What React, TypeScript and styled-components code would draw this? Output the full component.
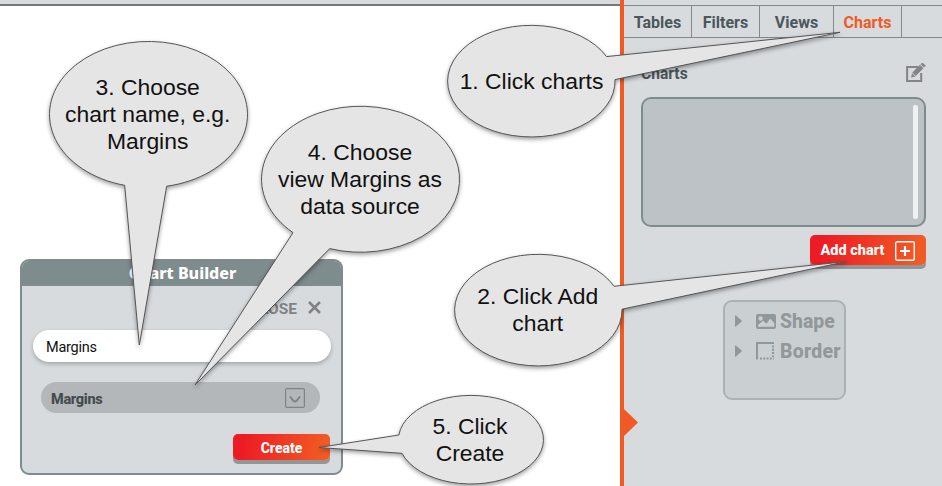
import React from 'react';
import styled, { createGlobalStyle } from 'styled-components';

const GlobalStyle = createGlobalStyle`
  * { box-sizing: border-box; }
  body { margin: 0; background: #fff; font-family: Roboto, sans-serif; }
`;

const Page = styled.div`
  position: relative;
  display: flex;
  width: 942px;
  height: 486px;
  overflow: hidden;
`;

const Workspace = styled.main`
  display: flex;
  flex-direction: column;
  width: 620px;
`;

const TopStrip = styled.div`
  height: 6px;
  background: #d7dbde;
  border-bottom: 2px solid #777;
`;

const Dialog = styled.section`
  display: flex;
  flex-direction: column;
  width: 323px;
  height: 216px;
  margin: 253px 0 0 20px;
  background: #d7dbde;
  border: 2px solid #7f8c8d;
  border-radius: 9px;
  overflow: hidden;
`;

const DialogTitle = styled.h1`
  margin: 0;
  height: 25px;
  padding-left: 2px;
  background: #7f8c8d;
  color: #fff;
  font: 800 16px/24px 'Noto Sans', sans-serif;
  text-align: center;
`;

const Label = styled.span<{ $size: number; $spacing?: number }>`
  font-size: ${(p) => p.$size}px;
  letter-spacing: ${(p) => p.$spacing ?? 0}px;
  white-space: nowrap;
`;

const CloseRow = styled.div`
  display: flex;
  justify-content: flex-end;
  align-items: center;
  gap: 11px;
  height: 21px;
  margin: 11px 20px 1px 0;
  color: #808284;
  font-weight: 700;
  ${Label} { padding-top: 2px; }
`;

const NameField = styled.div`
  display: flex;
  align-items: center;
  width: 298px;
  height: 32px;
  margin: 11px 0 0 11px;
  padding: 2px 13px 0;
  border-radius: 16px;
  background: #fff;
  color: #111;
  box-shadow: 0 2px 4px rgba(0, 0, 0, 0.25);
`;

const SourceSelect = styled.div`
  display: flex;
  align-items: center;
  justify-content: space-between;
  width: 279px;
  height: 31px;
  margin: 20px 0 0 19px;
  padding: 1px 15px 0 10px;
  border-radius: 16px;
  background: #b3b7b9;
  color: #434c4e;
  font-weight: 800;
  ${Label} { padding-top: 2px; }
`;

const ActionButton = styled.button<{ $width: number; $height: number }>`
  display: flex;
  align-items: center;
  justify-content: center;
  gap: 11px;
  flex: none;
  width: ${(p) => p.$width}px;
  height: ${(p) => p.$height}px;
  padding: 1px 0 0;
  border: 0;
  border-radius: 5px;
  background: linear-gradient(100deg, #ed1c24 12%, #f15a24 92%);
  box-shadow: 0 4px 0 #939698;
  color: #fff;
  font-family: Roboto, sans-serif;
  font-weight: 800;
`;

const DialogFooter = styled.div`
  display: flex;
  justify-content: flex-end;
  margin: 21px 11px 0 0;
`;

const Sidebar = styled.aside`
  display: flex;
  flex-direction: column;
  width: 322px;
  border-left: 4px solid #f15a24;
  background: #d7dbde;
`;

const Tabs = styled.nav`
  display: grid;
  grid-template-columns: 68px 68px 74px 68px 1fr;
  height: 33px;
  margin-top: 5px;
  border: solid #85888a;
  border-width: 1px 0;
`;

const Tab = styled.div<{ $active?: boolean }>`
  display: flex;
  align-items: center;
  justify-content: center;
  padding-top: 1px;
  border-right: 1px solid #85888a;
  color: ${(p) => (p.$active ? '#f15a24' : '#4b575a')};
  font-weight: 700;
  &:last-child { border-right: 0; }
`;

const SectionHead = styled.div`
  display: flex;
  justify-content: space-between;
  align-items: center;
  height: 22px;
  margin: 23px 16px 1px 17px;
  color: #4b575a;
  font-weight: 700;
  ${Label} { padding-top: 3px; }
`;

const ChartList = styled.div`
  display: flex;
  justify-content: flex-end;
  width: 285px;
  height: 130px;
  margin: 13px 0 0 17px;
  padding: 6px 6px 6px 0;
  border: 2px solid #7f8c8d;
  border-radius: 10px;
  background: #bdc2c6;
`;

const ScrollThumb = styled.div`
  width: 5px;
  height: 114px;
  border-radius: 2px;
  background: #eff0f2;
`;

const AddRow = styled.div`
  display: flex;
  justify-content: flex-end;
  margin: 8px 16px 0 0;
`;

const StyleTree = styled.div`
  width: 123px;
  height: 100px;
  margin: 35px 0 0 99px;
  padding: 4px 0 0 10px;
  border: 2px solid #a9b3b5;
  border-radius: 9px;
  background: #cacfd2;
  color: #92989a;
  font-weight: 800;
`;

const TreeRow = styled.div`
  display: grid;
  grid-template-columns: 21px 24px auto;
  align-items: center;
  height: 30px;
`;

const CollapseHandle = styled.svg`
  display: block;
  margin-top: 9px;
`;

const CalloutShapes = styled.svg`
  position: absolute;
  inset: 0;
  filter: drop-shadow(0 2px 2px rgba(0, 0, 0, 0.38));
  path { fill: #e5e5e5; stroke: #555; stroke-width: 1; }
`;

const CalloutText = styled.div<{ $x: number; $y: number }>`
  position: absolute;
  left: ${(p) => p.$x - 100}px;
  top: ${(p) => p.$y}px;
  width: 200px;
  color: #111;
  font: 22.9px/27px 'Liberation Sans', Arial, sans-serif;
  text-align: center;
  white-space: pre-line;
`;

type Callout = { text: string; x: number; y: number; d: string };

const callouts: Callout[] = [
  {
    text: '3. Choose\nchart name, e.g.\nMargins', x: 147.7, y: 73.5,
    d: 'M124.7 185.3 A99 73 0 1 1 166.7 186.2 L139.3 345 Z',
  },
  {
    text: '4. Choose\nview Margins as\ndata source', x: 360, y: 139,
    d: 'M293 232.6 A99 73 0 1 1 329.7 248.6 L195 385 Z',
  },
  {
    text: '1. Click charts', x: 531.5, y: 68,
    d: 'M606.5 56.6 A83.7 55.8 0 1 0 615 79.6 L840 32.3 Z',
  },
  {
    text: '2. Click Add\nchart', x: 537.7, y: 283,
    d: 'M614 286.3 A83.7 55.8 0 1 0 622 309.2 L846.5 261.5 Z',
  },
  {
    text: '5. Click\nCreate', x: 470, y: 413,
    d: 'M398.9 435 A72.5 44.3 0 1 1 402 453.3 L319 447.5 Z',
  },
];

const CloseIcon = () => (
  <svg width="13" height="13" viewBox="0 0 13 13" stroke="currentColor" strokeWidth="2.6">
    <path d="M1 1L12 12M12 1L1 12" />
  </svg>
);

const DropIcon = () => (
  <svg width="20" height="20" viewBox="0 0 20 20" fill="none" stroke="#808385">
    <rect x=".6" y=".6" width="18.8" height="18.8" rx="1.5" strokeWidth="1.2" />
    <path d="M5 8.5L8.2 12.5Q10 14.5 11.8 12.5L15 8.5" strokeWidth="2" />
  </svg>
);

const PlusIcon = () => (
  <svg width="20" height="20" viewBox="0 0 20 20" fill="none" stroke="#fff">
    <rect x=".7" y=".7" width="18.6" height="18.6" rx="1.5" strokeWidth="1.4" />
    <path d="M5 10H15M10 5V15" strokeWidth="2.2" />
  </svg>
);

const EditIcon = () => (
  <svg width="20" height="19" viewBox="0 0 20 19" fill="none" stroke="#848484">
    <path d="M12 4H1.1V17.9H15.2V10" strokeWidth="2" />
    <path d="M8 11.2L15.7 3.5" strokeWidth="4.8" />
    <path d="M16.3 2.9L18.1 1.1" strokeWidth="4.8" />
    <path d="M5.1 14.5L6 10.2L9.5 13.5Z" fill="#848484" stroke="none" />
  </svg>
);

const Arrow = () => (
  <svg width="7" height="12" viewBox="0 0 7 12" fill="currentColor">
    <path d="M0 1Q0 0 1 .6L6.6 5.5Q7 6 6.6 6.5L1 11.4Q0 12 0 11Z" />
  </svg>
);

const ShapeIcon = () => (
  <svg width="20" height="15" viewBox="0 0 20 15">
    <rect width="20" height="15" rx="2" fill="#92989a" />
    <path d="M2 12.8V11L7 6.7L10.5 9.8L14.3 4.5L18.3 9.3V12.8Z" fill="#cacfd2" />
    <circle cx="4.6" cy="4.5" r="2.2" fill="#cacfd2" />
  </svg>
);

const BorderIcon = () => (
  <svg width="18" height="18" viewBox="0 0 18 18" fill="none" stroke="#92989a" strokeWidth="2">
    <path d="M18 1H1V17.5" />
    <path d="M4 16.5H18" strokeDasharray="2 1.3" />
    <path d="M17 3.5V15" strokeDasharray="2 1.3" />
  </svg>
);

export default function App() {
  return (
    <Page>
      <GlobalStyle />
      <Workspace>
        <TopStrip />
        <Dialog>
          <DialogTitle>Chart Builder</DialogTitle>
          <CloseRow><Label $size={15.5}>CLOSE</Label><CloseIcon /></CloseRow>
          <NameField><Label $size={14.5} $spacing={-0.25}>Margins</Label></NameField>
          <SourceSelect><Label $size={14.5} $spacing={-0.3}>Margins</Label><DropIcon /></SourceSelect>
          <DialogFooter>
            <ActionButton $width={97} $height={26}><Label $size={14}>Create</Label></ActionButton>
          </DialogFooter>
        </Dialog>
      </Workspace>
      <Sidebar>
        <Tabs>
          <Tab><Label $size={16}>Tables</Label></Tab>
          <Tab><Label $size={16}>Filters</Label></Tab>
          <Tab><Label $size={16}>Views</Label></Tab>
          <Tab $active><Label $size={16}>Charts</Label></Tab>
          <Tab />
        </Tabs>
        <SectionHead><Label $size={15.6}>Charts</Label><EditIcon /></SectionHead>
        <ChartList><ScrollThumb /></ChartList>
        <AddRow>
          <ActionButton $width={116} $height={30}><Label $size={14.5}>Add chart</Label><PlusIcon /></ActionButton>
        </AddRow>
        <StyleTree>
          <TreeRow><Arrow /><ShapeIcon /><Label $size={19.4}>Shape</Label></TreeRow>
          <TreeRow><Arrow /><BorderIcon /><Label $size={19.4} $spacing={0.3}>Border</Label></TreeRow>
        </StyleTree>
        <CollapseHandle width="14" height="27" viewBox="0 0 14 27">
          <path d="M0 0L14 13.5L0 27Z" fill="#f15a24" />
        </CollapseHandle>
      </Sidebar>
      <CalloutShapes width="942" height="486" viewBox="0 0 942 486">
        {callouts.map((c) => <path key={c.text} d={c.d} />)}
      </CalloutShapes>
      {callouts.map((c) => <CalloutText key={c.text} $x={c.x} $y={c.y}>{c.text}</CalloutText>)}
    </Page>
  );
}
